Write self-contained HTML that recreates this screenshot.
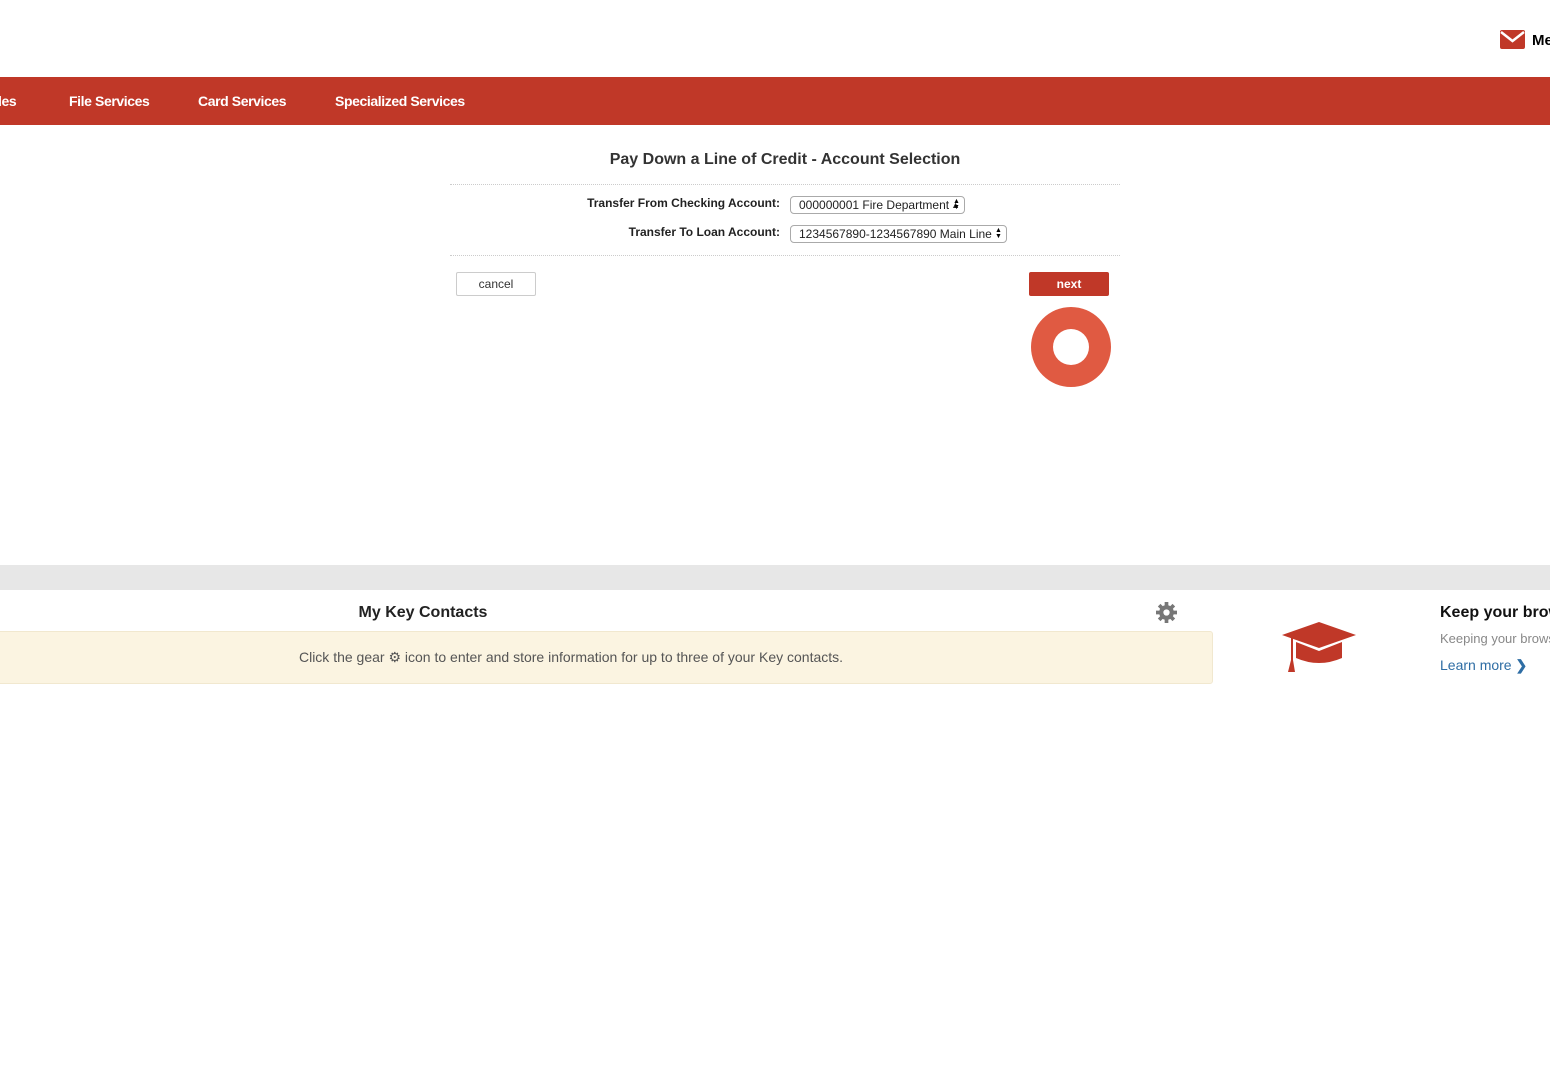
<!DOCTYPE html>
<html><head><style>
body{margin:0;width:1550px;height:1087px;background:#fff;font-family:"Liberation Sans",Arial,sans-serif;position:relative;overflow:hidden}
.a{position:absolute}
.nav{top:77px;left:0;width:1550px;height:48px;background:#c03828}
.nav span{position:absolute;top:16px;color:#fff;font-size:14px;font-weight:bold;letter-spacing:-0.4px}
.sel{border:1px solid #aaa;border-radius:4px;height:18px;font-size:12px;line-height:17px;padding:0 0 0 8px;box-sizing:border-box;background:#fff;color:#222;white-space:nowrap;overflow:hidden}
.sel i{font-style:normal;font-size:9px;position:absolute;right:4px;top:0}
.lbl{font-size:12px;font-weight:bold;color:#222;text-align:right;width:330px}
.dot{border-top:1px dotted #ccc;left:450px;width:670px}
</style></head><body>
<svg class="a" style="left:1500px;top:30px" width="25" height="19" viewBox="0 0 25 19"><rect width="25" height="19" rx="2" fill="#c03828"/><path d="M1 2 L12.5 11 L24 2" stroke="#fff" stroke-width="2.5" fill="none"/></svg>
<div class="a" style="left:1532px;top:32px;font-size:15px;font-weight:bold">Me</div>
<div class="a nav"><span style="left:-2px">les</span><span style="left:69px">File Services</span><span style="left:198px">Card Services</span><span style="left:335px">Specialized Services</span></div>
<div class="a" style="left:450px;width:670px;top:151px;text-align:center;font-size:16px;font-weight:bold;color:#333">Pay Down a Line of Credit - Account Selection</div>
<div class="a dot" style="top:184px"></div>
<div class="a lbl" style="left:450px;top:196px">Transfer From Checking Account:</div>
<div class="a sel" style="left:790px;top:196px;width:175px">000000001 Fire Department<i>▲<br></i></div>
<div class="a" style="left:953px;top:199px;font-size:7px;line-height:6px">▲<br>▼</div>
<div class="a lbl" style="left:450px;top:225px">Transfer To Loan Account:</div>
<div class="a sel" style="left:790px;top:225px;width:217px">1234567890-1234567890 Main Line</div>
<div class="a" style="left:995px;top:228px;font-size:7px;line-height:6px">▲<br>▼</div>
<div class="a dot" style="top:255px"></div>
<div class="a" style="left:456px;top:272px;width:78px;height:22px;border:1px solid #ccc;border-radius:2px;text-align:center;line-height:22px;font-size:12px;color:#333">cancel</div>
<div class="a" style="left:1029px;top:272px;width:80px;height:24px;background:#c03828;border-radius:2px;text-align:center;line-height:24px;font-size:12px;font-weight:bold;color:#fff">next</div>
<div class="a" style="left:1031px;top:307px;width:80px;height:80px;border-radius:50%;background:#e05a42"></div>
<div class="a" style="left:1053px;top:329px;width:36px;height:36px;border-radius:50%;background:#fff"></div>
<div class="a" style="left:0;top:565px;width:1550px;height:25px;background:#e7e7e7"></div>
<div class="a" style="left:0;width:846px;top:604px;text-align:center;font-size:16px;font-weight:bold;color:#222">My Key Contacts</div>
<svg class="a" style="left:1156px;top:602px" width="21" height="21" viewBox="0 0 20 20"><g fill="#777"><circle cx="10" cy="10" r="7"/><g stroke="#777" stroke-width="3.5"><path d="M10 0V20M0 10H20M3 3L17 17M17 3L3 17"/></g></g><circle cx="10" cy="10" r="3" fill="#fff"/></svg>
<div class="a" style="left:-5px;top:631px;width:1216px;height:51px;background:#fbf4e1;border:1px solid #f1e8cf;border-radius:3px"></div>
<div class="a" style="left:0;width:1142px;top:649px;text-align:center;font-size:14px;color:#555">Click the gear ⚙ icon to enter and store information for up to three of your Key contacts.</div>
<svg class="a" style="left:1282px;top:622px" width="74" height="52" viewBox="0 0 74 52"><path d="M0 13 L37 0 L74 13 L37 26 Z" fill="#c03828"/><path d="M14 20 L14 36 Q37 46 60 36 L60 20 L37 29 Z" fill="#c03828"/><path d="M9 15 L9 38 L6 50 L13 50 L11 38 L11 15" fill="#c03828"/></svg>
<div class="a" style="left:1440px;top:604px;font-size:16px;font-weight:bold;color:#111;white-space:nowrap">Keep your browser</div>
<div class="a" style="left:1440px;top:631px;font-size:13px;color:#888;white-space:nowrap">Keeping your browser</div>
<div class="a" style="left:1440px;top:657px;font-size:14px;color:#2e6da4;white-space:nowrap">Learn more <b>❯</b></div>
</body></html>
